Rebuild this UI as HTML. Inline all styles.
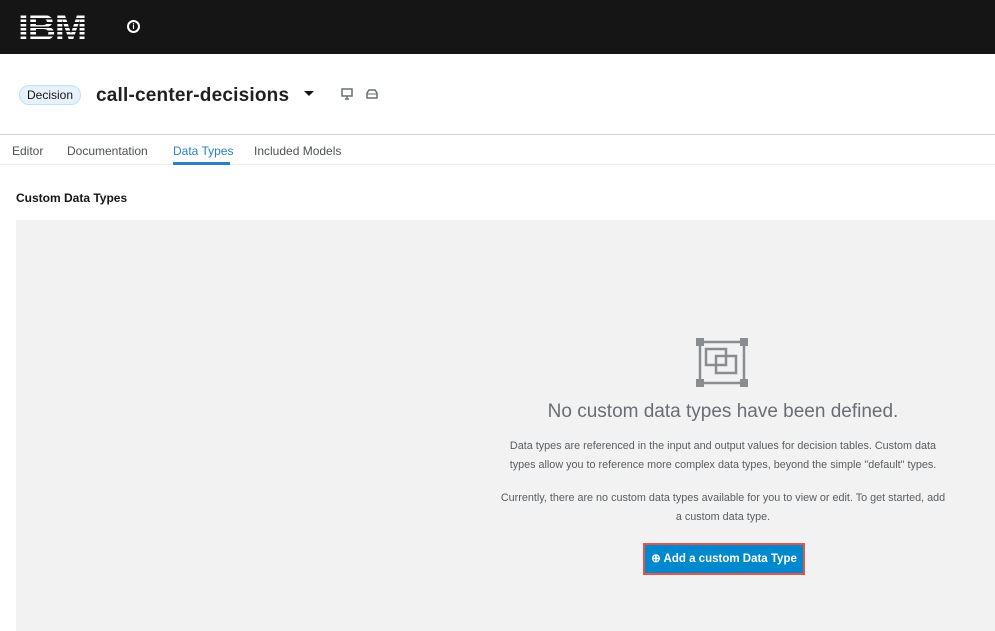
<!DOCTYPE html>
<html><head><style>
*{margin:0;padding:0;box-sizing:border-box}
body{width:995px;height:631px;overflow:hidden;background:#fff;font-family:"Liberation Sans",sans-serif;color:#151515;position:relative}
.top{position:absolute;left:0;top:0;width:995px;height:54px;background:#151515}
.ibm{position:absolute;left:18px;top:7px;font:900 36px "Liberation Sans";letter-spacing:-1px;background:repeating-linear-gradient(#fff 0 2.5px,#151515 2.5px 4.2px);-webkit-background-clip:text;color:transparent;transform:scaleX(1.08);transform-origin:left}
.info{position:absolute;left:127px;top:20px;width:13px;height:13px;border:2px solid #fff;border-radius:50%;color:#fff;font:bold 8px "Liberation Sans";text-align:center;line-height:9px}
.badge{position:absolute;left:19px;top:85px;height:20px;padding:0 7px;border:1px solid #bee1f4;background:#e7f1fa;border-radius:10px;font-size:12px;line-height:18px;color:#151515}
.title{position:absolute;left:96px;top:85px;font-size:19px;font-weight:bold;color:#202020;letter-spacing:0.2px}
.hl{position:absolute;left:0;top:134px;width:995px;height:1px;background:#d2d2d2}
.tabs{position:absolute;left:0;top:135px;width:995px;height:30px;border-bottom:1px solid #ececec}
.tab{position:absolute;top:9px;font-size:12px;color:#4f5255}
.sel{color:#2b7fc6}
.und{position:absolute;left:173px;top:27px;width:57px;height:3px;background:#2b7fc6}
.lbl{position:absolute;left:16px;top:191px;font-size:12px;font-weight:bold;color:#151515}
.panel{position:absolute;left:16px;top:220px;width:979px;height:411px;background:#f2f2f2}
.c{position:absolute;left:473px;width:500px;text-align:center;color:#5a5d60}
h2{font-weight:normal;font-size:19px;color:#6a6e73}
p{font-size:10.8px;line-height:19px}
.btn{position:absolute;left:643px;top:543px;width:162px;height:32px;border:2px solid #e5544b;background:#0088ce;padding:1px}
.btn div{background:#0088ce;height:100%;color:#fff;font-size:11.5px;font-weight:bold;line-height:26px;text-align:center}
</style></head><body>
<div class="top"><div class="ibm">IBM</div><div class="info">i</div></div>
<div class="badge">Decision</div>
<div class="title">call-center-decisions</div>
<svg style="position:absolute;left:304px;top:91px" width="10" height="6"><path d="M0 0H10L5 5Z" fill="#151515"/></svg>
<svg style="position:absolute;left:341px;top:88px" width="40" height="12"><rect x="1" y="1" width="10" height="7" fill="none" stroke="#6a6e73" stroke-width="1.5"/><path d="M4 11H8M6 8V11" stroke="#6a6e73" stroke-width="1.5"/><path d="M26 5L28 2H34L36 5V10H26Z" fill="none" stroke="#6a6e73" stroke-width="1.5"/><path d="M26 6H36" stroke="#6a6e73"/></svg>
<div class="hl"></div>
<div class="tabs">
<span class="tab" style="left:12px">Editor</span>
<span class="tab" style="left:67px">Documentation</span>
<span class="tab sel" style="left:173px">Data Types</span>
<span class="tab" style="left:254px">Included Models</span>
<div class="und"></div></div>
<div class="lbl">Custom Data Types</div>
<div class="panel"></div>
<svg style="position:absolute;left:696px;top:338px" width="54" height="50" fill="none" stroke="#8a8d90" stroke-width="2.5"><rect x="4" y="4" width="44" height="41"/><rect x="10" y="11" width="20" height="16"/><rect x="20" y="18" width="20" height="17"/><g fill="#8a8d90" stroke="none"><rect x="0" y="0" width="8" height="8"/><rect x="44" y="0" width="8" height="8"/><rect x="0" y="41" width="8" height="8"/><rect x="44" y="41" width="8" height="8"/></g></svg>
<div class="c" style="top:401px"><h2>No custom data types have been defined.</h2></div>
<div class="c" style="top:437px"><p>Data types are referenced in the input and output values for decision tables. Custom data<br>types allow you to reference more complex data types, beyond the simple "default" types.</p></div>
<div class="c" style="top:489px"><p>Currently, there are no custom data types available for you to view or edit. To get started, add<br>a custom data type.</p></div>
<div class="btn"><div>&#x2295; Add a custom Data Type</div></div>
</body></html>
